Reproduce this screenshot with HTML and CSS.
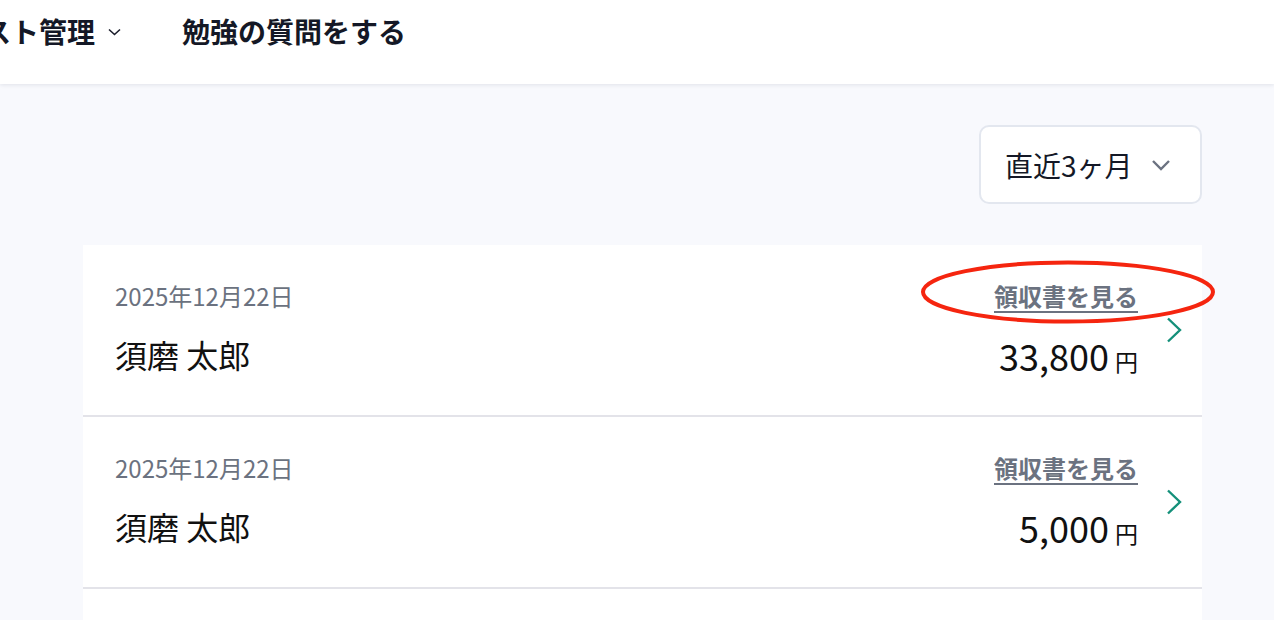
FILE: index.html
```html
<!DOCTYPE html>
<html lang="ja">
<head>
<meta charset="utf-8">
<title>領収書</title>
<link rel="stylesheet" href="styles.css">
</head>
<body>
<header class="header">
  <nav class="nav">
    <div class="nav-item">テスト管理
      <svg class="nav-caret" width="13" height="8" viewBox="0 0 13 8"><path d="M1 1.5 L6.5 6.5 L12 1.5" fill="none" stroke="#1a1d2b" stroke-width="1.6"/></svg>
    </div>
    <div class="nav-item">勉強の質問をする</div>
  </nav>
</header>
<main class="main">
  <div class="toolbar">
    <button class="period">直近3ヶ月
      <svg class="period-caret" width="20" height="12" viewBox="0 0 20 12"><path d="M2 2 L10 10 L18 2" fill="none" stroke="#6b7280" stroke-width="2.4"/></svg>
    </button>
  </div>
  <div class="list">
    <div class="row">
      <div class="row-left">
        <div class="date">2025年12月22日</div>
        <div class="name">須磨 太郎</div>
      </div>
      <div class="row-right">
        <a class="receipt" href="#">領収書を見る</a>
        <div class="amount"><span class="num">33,800</span><span class="yen">円</span></div>
      </div>
      <svg class="chev" width="16" height="26" viewBox="0 0 16 26"><path d="M2 1.5 L14 13 L2 24.5" fill="none" stroke="#14907a" stroke-width="2.4"/></svg>
    </div>
    <div class="row">
      <div class="row-left">
        <div class="date">2025年12月22日</div>
        <div class="name">須磨 太郎</div>
      </div>
      <div class="row-right">
        <a class="receipt" href="#">領収書を見る</a>
        <div class="amount"><span class="num">5,000</span><span class="yen">円</span></div>
      </div>
      <svg class="chev" width="16" height="26" viewBox="0 0 16 26"><path d="M2 1.5 L14 13 L2 24.5" fill="none" stroke="#14907a" stroke-width="2.4"/></svg>
    </div>
    <div class="row"></div>
    <svg class="annot" width="296" height="66" viewBox="0 0 296 66"><ellipse cx="148" cy="33" rx="145" ry="29.5" fill="none" stroke="#f5250f" stroke-width="4"/></svg>
  </div>
</main>
</body>
</html>
```

FILE: styles.css
```css
* { box-sizing: border-box; }
html, body { margin: 0; padding: 0; }
body {
  font-family: "Noto Sans CJK JP", "Noto Sans", sans-serif;
  background: #f8f9fd;
  color: #111;
  overflow: hidden;
  height: 620px;
}
.header {
  height: 84px;
  background: #fff;
  box-shadow: 0 1px 4px rgba(20, 30, 60, 0.10);
  padding-top: 11px;
  position: relative;
  z-index: 1;
}
.nav {
  display: flex;
  align-items: center;
  margin-left: -45px;
  gap: 61px;
}
.nav-item {
  font-size: 28px;
  font-weight: 700;
  line-height: 40px;
  color: #141826;
  display: flex;
  align-items: center;
  white-space: nowrap;
}
.nav-caret { margin-left: 13px; margin-top: 2px; }
.main {
  padding: 41px 72px 0 83px;
}
.toolbar {
  display: flex;
  justify-content: flex-end;
}
.period {
  width: 223px;
  height: 79px;
  background: #fff;
  border: 2px solid #e3e7ef;
  border-radius: 10px;
  font-family: inherit;
  font-size: 28px;
  color: #141826;
  display: flex;
  align-items: center;
  padding: 0 0 0 24px;
  cursor: pointer;
}
.period-caret { margin-left: 18px; }
.list {
  margin-top: 41px;
  background: #fff;
  position: relative;
}
.row {
  display: flex;
  align-items: flex-start;
  height: 172px;
  padding: 33px 20px 0 32px;
  border-bottom: 2px solid #e3e3e9;
}
.row-left { flex: 1; }
.date {
  font-size: 24px;
  line-height: 36px;
  color: #6b7280;
}
.name {
  margin-top: 16px;
  font-size: 32px;
  line-height: 48px;
  color: #111;
}
.row-right {
  display: flex;
  flex-direction: column;
  align-items: flex-end;
}
.receipt {
  font-size: 24px;
  font-weight: 700;
  line-height: 36px;
  color: #6b7280;
  text-decoration: underline;
  text-underline-offset: 5px;
  text-decoration-thickness: 2px;
}
.amount {
  margin-top: 17px;
  line-height: 48px;
  display: flex;
  align-items: baseline;
  color: #111;
}
.num { font-size: 36px; }
.yen { font-size: 23px; margin-left: 6px; }
.chev {
  align-self: center;
  margin-left: 28px;
  margin-top: -34px;
}
.annot {
  position: absolute;
  left: 837px;
  top: 14px;
}
```
